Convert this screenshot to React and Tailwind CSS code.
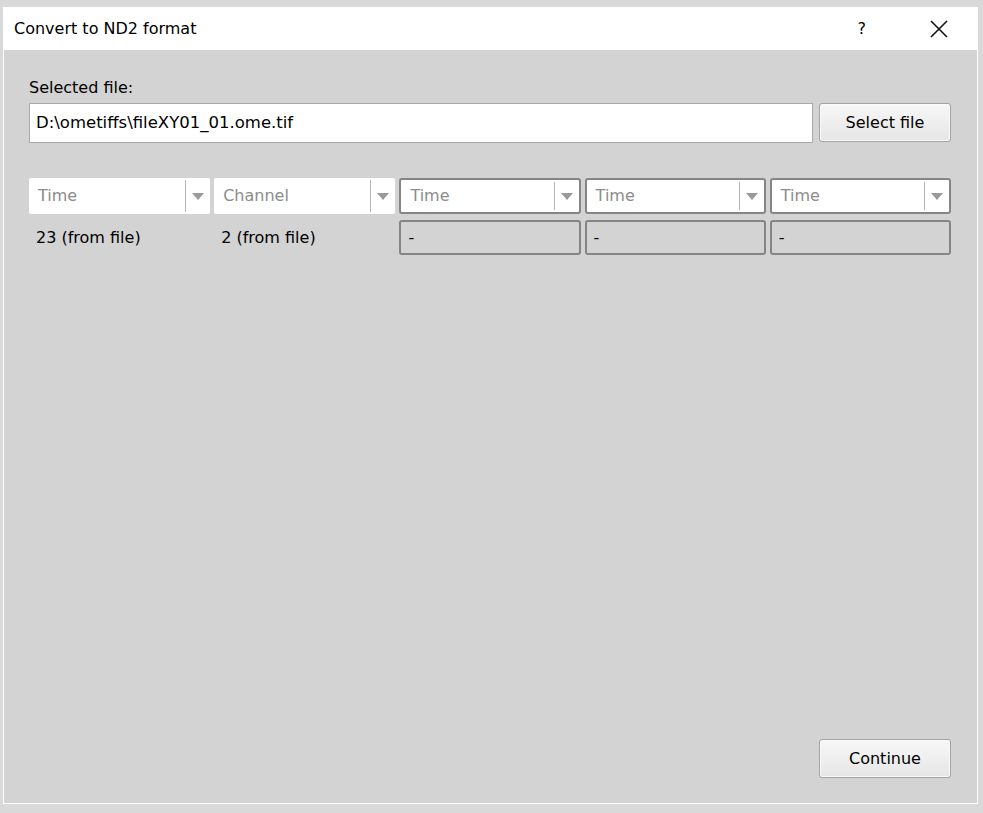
import { useState } from "react";

const font = { fontFamily: "Tahoma, 'DejaVu Sans', 'Noto Sans', sans-serif" };

function Combo({ label, framed }) {
  return (
    <div
      className={
        "flex h-[36px] items-stretch bg-white " +
        (framed ? "rounded-[3px] border-2 border-[#858585]" : "rounded-[2px]")
      }
    >
      <div className="flex flex-1 items-center px-[9px] text-[16px] text-[#8c8c8c]">{label}</div>
      <div className="my-[2px] w-px bg-[#b4b4b4]" />
      <div className="flex w-[24px] items-center justify-center">
        <svg width="12" height="7" viewBox="0 0 12 7">
          <path d="M0 0h12L6 7z" fill="#9a9a9a" />
        </svg>
      </div>
    </div>
  );
}

function Button({ children }) {
  return (
    <button className="h-[39px] w-[132px] rounded-[3px] border border-[#a3a3a3] bg-gradient-to-b from-[#f7f7f7] to-[#e6e6e6] text-[16px] text-black shadow-[inset_0_0_0_1px_#fafafa]">
      {children}
    </button>
  );
}

export default function App() {
  const [path] = useState("D:\\ometiffs\\fileXY01_01.ome.tif");
  const dims = [
    { label: "Time", value: "23 (from file)" },
    { label: "Channel", value: "2 (from file)" },
    { label: "Time", framed: true, value: "-" },
    { label: "Time", framed: true, value: "-" },
    { label: "Time", framed: true, value: "-" },
  ];

  return (
    <div className="h-[813px] w-[983px] bg-[#d9d9d9] pl-[3px] pt-[7px]" style={font}>
      <div className="flex h-[797px] w-[975px] flex-col border-x border-b border-white">
        {/* title bar */}
        <div className="flex h-[43px] items-center bg-white pl-[10px]">
          <span className="flex-1 text-[16px] text-black">Convert to ND2 format</span>
          <span className="mr-[64px] text-[16px] text-black">?</span>
          <svg className="mr-[29px]" width="18" height="18" viewBox="0 0 18 18">
            <path d="M1 1L17 17M17 1L1 17" stroke="#111" strokeWidth="1.6" />
          </svg>
        </div>

        {/* body */}
        <div className="flex flex-1 flex-col bg-[#d3d3d3] pl-[25px] pr-[26px] pt-[28px] pb-[25px]">
          <div className="text-[16px] leading-[20px] text-black">Selected file:</div>
          <div className="mt-[5px] flex gap-[6px]">
            <div className="flex h-[40px] flex-1 items-center border border-[#a9a9a9] bg-white px-[6px] text-[16.5px] text-black">
              {path}
            </div>
            <Button>Select file</Button>
          </div>

          <div className="mt-[35px] grid grid-cols-5 gap-x-[4px] gap-y-[6px]">
            {dims.map((d, i) => (
              <Combo key={"c" + i} label={d.label} framed={d.framed} />
            ))}
            {dims.map((d, i) =>
              d.framed ? (
                <div
                  key={"v" + i}
                  className="flex h-[35px] items-center rounded-[3px] border-2 border-[#858585] px-[7px] text-[16px] text-black"
                >
                  {d.value}
                </div>
              ) : (
                <div key={"v" + i} className="flex h-[36px] items-center px-[7px] text-[16px] text-black">
                  {d.value}
                </div>
              )
            )}
          </div>

          <div className="mt-auto flex justify-end">
            <Button>Continue</Button>
          </div>
        </div>
      </div>
    </div>
  );
}
